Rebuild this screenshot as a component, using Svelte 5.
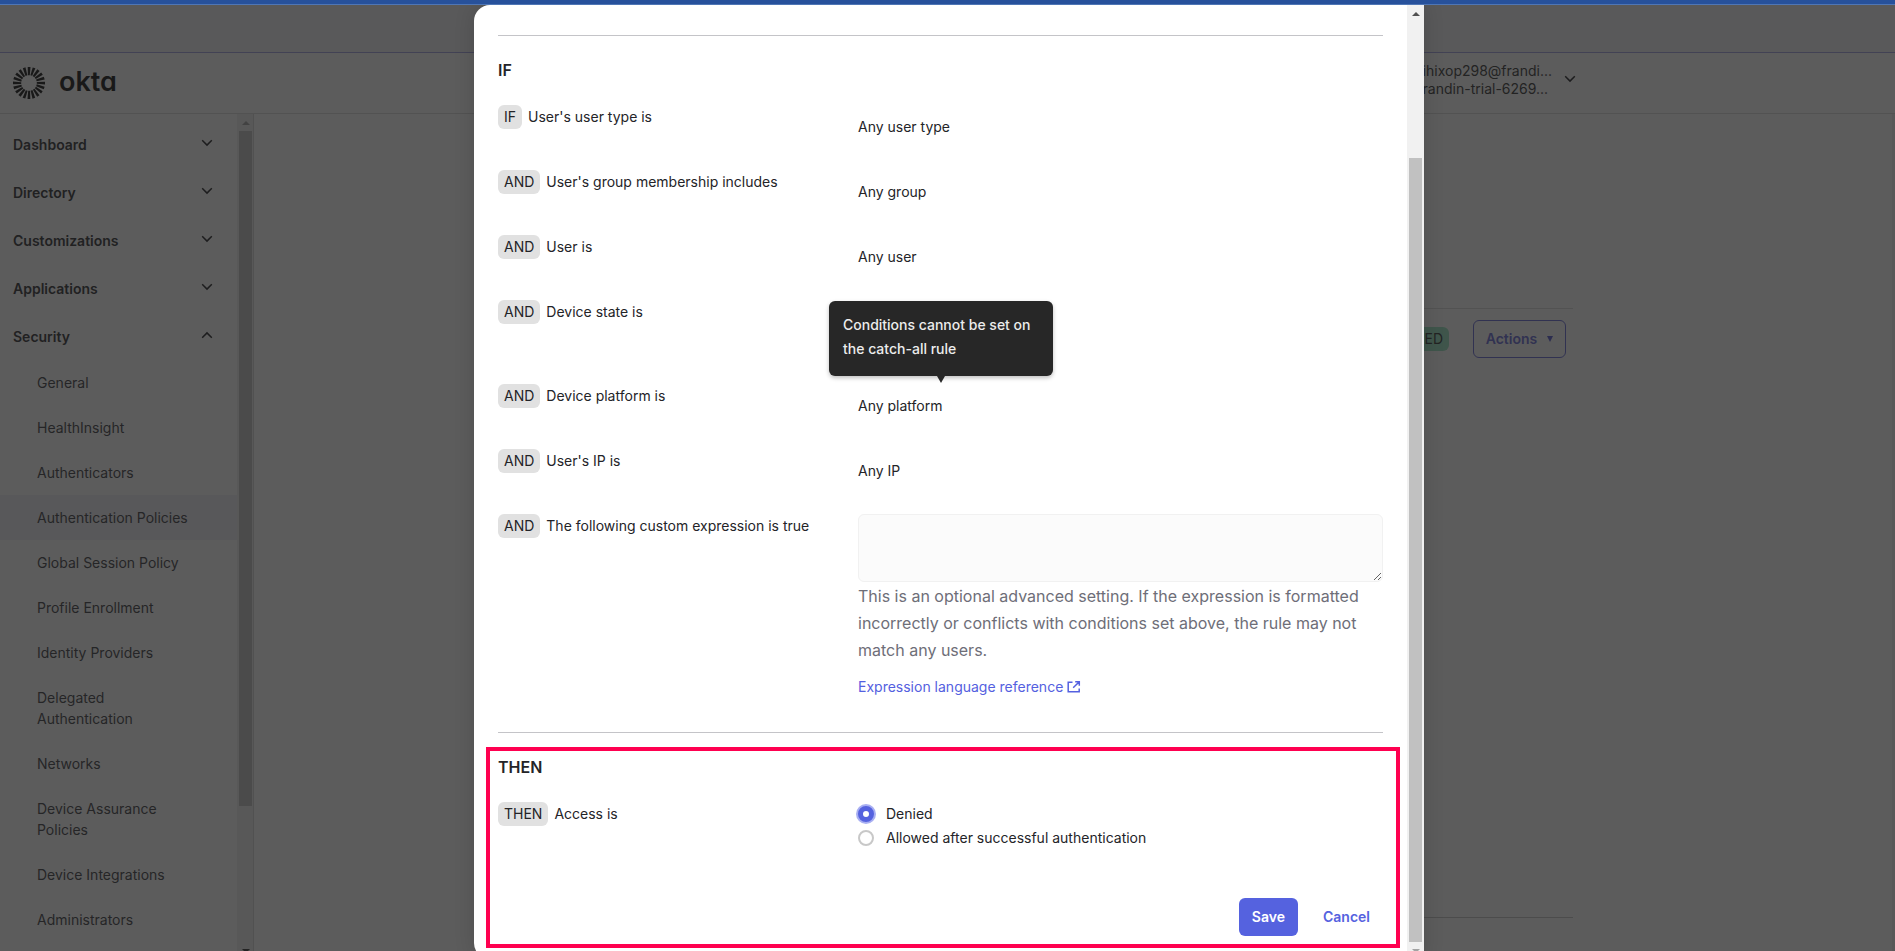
<script>
  const sections = ['Dashboard', 'Directory', 'Customizations', 'Applications'];
  const security = [
    'General', 'HealthInsight', 'Authenticators', 'Authentication Policies',
    'Global Session Policy', 'Profile Enrollment', 'Identity Providers',
    'Delegated Authentication', 'Networks', 'Device Assurance Policies',
    'Device Integrations', 'Administrators'
  ];
  const conditions = [
    { tag: 'IF', label: "User's user type is", value: 'Any user type' },
    { tag: 'AND', label: "User's group membership includes", value: 'Any group' },
    { tag: 'AND', label: 'User is', value: 'Any user' },
    { tag: 'AND', label: 'Device state is', value: '', tall: true },
    { tag: 'AND', label: 'Device platform is', value: 'Any platform', tip: true },
    { tag: 'AND', label: "User's IP is", value: 'Any IP' }
  ];
  const rays = Array.from({ length: 20 }, (_, i) => i * 18);
  let access = $state('denied');
  let expression = $state('');
</script>

{#snippet chevron(up)}
  <svg class="chevron" class:up width="12" height="8" viewBox="0 0 12 8" aria-hidden="true">
    <path d="M1.2 1.3 6 6.1l4.8-4.8" fill="none" stroke="currentColor" stroke-width="1.5" />
  </svg>
{/snippet}

<div class="app">
  <div class="strip"></div>
  <div class="stage">
    <div class="banner"></div>
    <header>
      <a class="brand" href="#home">
        <svg width="32" height="32" viewBox="-16 -16 32 32" aria-hidden="true">
          {#each rays as angle}
            <path d="M-1.3-16h2.8L.8-7.8h-1.9z" fill="currentColor" transform="rotate({angle})" />
          {/each}
        </svg>
        <span>okta</span>
      </a>
      <div class="holder">
        <button class="account">
          <span>ihixop298@frandi...<br />randin-trial-6269...</span>
          {@render chevron(false)}
        </button>
      </div>
    </header>
    <div class="columns">
      <aside>
        <nav>
          {#each sections as name}
            <button class="section">{name}{@render chevron(false)}</button>
          {/each}
          <button class="section last">Security{@render chevron(true)}</button>
          {#each security as name}
            <a href="#policies" class:current={name === 'Authentication Policies'}>{name}</a>
          {/each}
        </nav>
        <div class="track side">
          <i class="arrow"></i>
          <i class="thumb"></i>
          <i class="rest"></i>
          <i class="arrow down"></i>
        </div>
      </aside>
      <main>
        <div class="policy">
          <div class="tools">
            <span class="status">ED</span>
            <button class="actions">Actions <i></i></button>
          </div>
        </div>
      </main>
      <div class="edge"></div>
    </div>

    <div class="backdrop">
      <div class="modal" role="dialog" aria-modal="true" aria-labelledby="if-title">
        <form onsubmit={(e) => e.preventDefault()}>
          <hr />
          <h2 id="if-title">IF</h2>
          {#each conditions as c}
            <div class="row" class:tall={c.tall}>
              <div><span class="tag">{c.tag}</span>{c.label}</div>
              <div class="value">
                {c.value}
                {#if c.tip}
                  <div class="tooltip" role="tooltip">Conditions cannot be set on the catch-all rule</div>
                {/if}
              </div>
            </div>
          {/each}
          <div class="row custom">
            <label for="expression"><span class="tag">AND</span>The following custom expression is true</label>
            <div>
              <textarea id="expression" bind:value={expression} disabled></textarea>
              <p>This is an optional advanced setting. If the expression is formatted incorrectly or conflicts with conditions set above, the rule may not match any users.</p>
              <a class="reference" href="#reference">Expression language reference
                <svg width="14" height="14" viewBox="0 0 14 14" aria-hidden="true">
                  <path d="M5.5 2.2H1.2v9.6h11V8.5M8.2 1.7h4.1v4M12 2 6.2 7.8" fill="none" stroke="currentColor" stroke-width="1.5" />
                </svg>
              </a>
            </div>
          </div>
          <hr />
          <section>
            <h2>THEN</h2>
            <div class="row access">
              <div><span class="tag">THEN</span>Access is</div>
              <div>
                <label class="option"><input type="radio" name="access" value="denied" bind:group={access} />Denied</label>
                <label class="option"><input type="radio" name="access" value="allowed" bind:group={access} />Allowed after successful authentication</label>
              </div>
            </div>
            <div class="buttons">
              <button class="save">Save</button>
              <button class="cancel" type="button">Cancel</button>
            </div>
          </section>
        </form>
        <div class="track">
          <i class="arrow"></i>
          <i class="gap"></i>
          <i class="thumb"></i>
          <i class="arrow down"></i>
        </div>
      </div>
    </div>
  </div>
</div>

<style>
  * { box-sizing: border-box; }
  button, textarea { font: inherit; color: inherit; }
  button { border: 0; background: none; padding: 0; cursor: pointer; }
  a { color: inherit; text-decoration: none; }

  .app {
    height: 100vh;
    overflow: hidden;
    display: flex;
    flex-direction: column;
    font: 14px/24px Inter, sans-serif;
    color: #242428;
  }
  .strip { flex: none; height: 5px; background: #27519b; border-bottom: 1px solid #4f76b5; }
  .stage { position: relative; flex: 1; min-height: 0; overflow: hidden; display: flex; flex-direction: column; background: #fff; }
  .banner { flex: none; height: 48px; background: #f4f4f8; border-bottom: 1px solid #a0a2e0; }
  header { flex: none; height: 61px; display: flex; align-items: center; border-bottom: 1px solid #dadada; padding-right: 3px; }
  .brand { flex: none; width: 254px; padding-left: 13px; display: flex; align-items: center; gap: 14px; color: #111; }
  .brand span { padding-bottom: 2px; font-size: 27px; font-weight: 600; line-height: 32px; font-feature-settings: "cv11"; }
  .holder { flex: 1; max-width: 1322px; display: flex; justify-content: flex-end; }
  .account { display: flex; align-items: center; gap: 12px; text-align: left; line-height: 18px; color: #333; }
  .account span { padding-bottom: 6px; }
  .account .chevron { margin-bottom: 8px; }
  .chevron { flex: none; color: #1d1d21; }
  .up { transform: scaleY(-1); }

  .columns { flex: 1; min-height: 0; display: flex; }
  aside { flex: none; width: 254px; height: calc(100% + 8px); display: flex; border-right: 1px solid #d8d8d8; }
  nav { flex: 1; padding-top: 7px; display: flex; flex-direction: column; overflow: hidden; }
  .section { flex: none; height: 48px; padding: 0 24px 0 13px; display: flex; align-items: center; justify-content: space-between; font-weight: 600; color: #2c2c30; }
  .section .chevron { margin-bottom: 4px; }
  .last { margin-bottom: -1px; }
  nav a { flex: none; padding: 12px 40px 12px 37px; line-height: 21px; color: #3c3c42; }
  .current { background: #f0f0f6; }

  .track { flex: none; width: 17px; padding: 0 2px; display: flex; flex-direction: column; background: #f1f1f1; }
  .arrow { flex: none; height: 17px; display: grid; place-items: center; }
  .arrow::before { content: ""; border: 4px solid transparent; border-top: 0; border-bottom-color: #505050; }
  .arrow.down::before { border-bottom: 0; border-top: 4px solid #a3a3a3; }
  .thumb { flex: 1; background: #c1c1c1; }
  .side { width: 16px; padding-right: 1px; }
  .side .thumb { flex: 675; }
  .side .arrow::before { border-bottom-color: #a3a3a3; }
  .side .arrow.down::before { border-top-color: #333; }
  .rest { flex: 136; }
  .gap { flex: none; height: 136px; }
  .edge { flex: none; width: 3px; background: #f1f1f1; }

  main { flex: 1; display: flex; justify-content: center; }
  .policy { width: 1000px; margin: 194px 0 33px; border-top: 1px solid #dadada; border-bottom: 1px solid #c4c4c4; }
  .tools { display: flex; justify-content: flex-end; align-items: center; gap: 24px; padding: 11px 7px; }
  .status { background: #96e6c0; border-radius: 6px; padding: 0 6px; color: #333; }
  .actions { width: 93px; height: 38px; border: 1px solid #6468d8; border-radius: 6px; color: #6468d8; font-weight: 600; display: flex; align-items: center; justify-content: center; gap: 10px; }
  .actions i { border: 3px solid transparent; border-top: 6px solid #5256d0; border-bottom: 0; }

  .backdrop { position: absolute; inset: 0; padding-left: 3px; display: flex; justify-content: center; background: rgba(29, 29, 29, 0.72); }
  .modal { flex: none; width: 950px; height: calc(100vh + 3px); display: flex; overflow: hidden; background: #fff; border-radius: 16px 0 0 16px; box-shadow: 0 0 20px rgba(0, 0, 0, 0.15); }
  form { flex: 1; padding: 30px 24px 0; }
  hr { border: 0; height: 1px; margin: 0; background: #c4c4c8; }
  h2 { margin: 22px 0 23px; font-size: 16px; line-height: 24px; font-weight: 600; }
  .row { display: grid; grid-template-columns: 360px 1fr; align-items: start; min-height: 65px; }
  .tall { min-height: 84px; }
  .tag { display: inline-block; margin-right: 6px; padding: 0 6px; border-radius: 6px; background: #e1e1e1; }
  .value { position: relative; padding-top: 10px; }
  .tooltip { position: absolute; left: -29px; bottom: 42px; width: 224px; padding: 12px 14px 15px; border-radius: 6px; background: #272727; color: #ececec; font-weight: 500; box-shadow: 0 2px 4px rgba(0, 0, 0, 0.25); }
  .tooltip::after { content: ""; position: absolute; top: 100%; left: 108px; border: 4px solid transparent; border-top: 7px solid #272727; border-bottom: 0; }
  .custom { padding-bottom: 33px; }
  textarea { display: block; width: 100%; height: 68px; border: 1px solid #f1f1f1; border-radius: 6px; background: #fbfbfb; resize: vertical; }
  p { margin: 0; padding: 1px 0 11px; font-size: 16px; line-height: 27px; color: #6e6e78; }
  .reference { display: flex; align-items: center; gap: 4px; color: #5460e0; }

  section { margin: 14px -17px 0 -12px; padding: 4px 13px 8px 8px; border: 4px solid #ff0050; }
  section h2 { margin-top: 0; }
  .access { min-height: 96px; }
  .option { display: flex; align-items: center; gap: 12px; }
  input { appearance: none; width: 16px; height: 16px; margin: 0; border: 2px solid #c8c8c8; border-radius: 50%; background: #fff; }
  input:checked { border: 5px solid #5562df; box-shadow: 0 0 0 2px #a8aff2; }
  .buttons { display: flex; justify-content: flex-end; gap: 12px; font-weight: 600; }
  .buttons button { height: 38px; padding: 0 13px; border-radius: 6px; color: #5562df; }
  .buttons .save { background: #5562df; color: #fff; }
  :global(body) { margin: 0; }
</style>
